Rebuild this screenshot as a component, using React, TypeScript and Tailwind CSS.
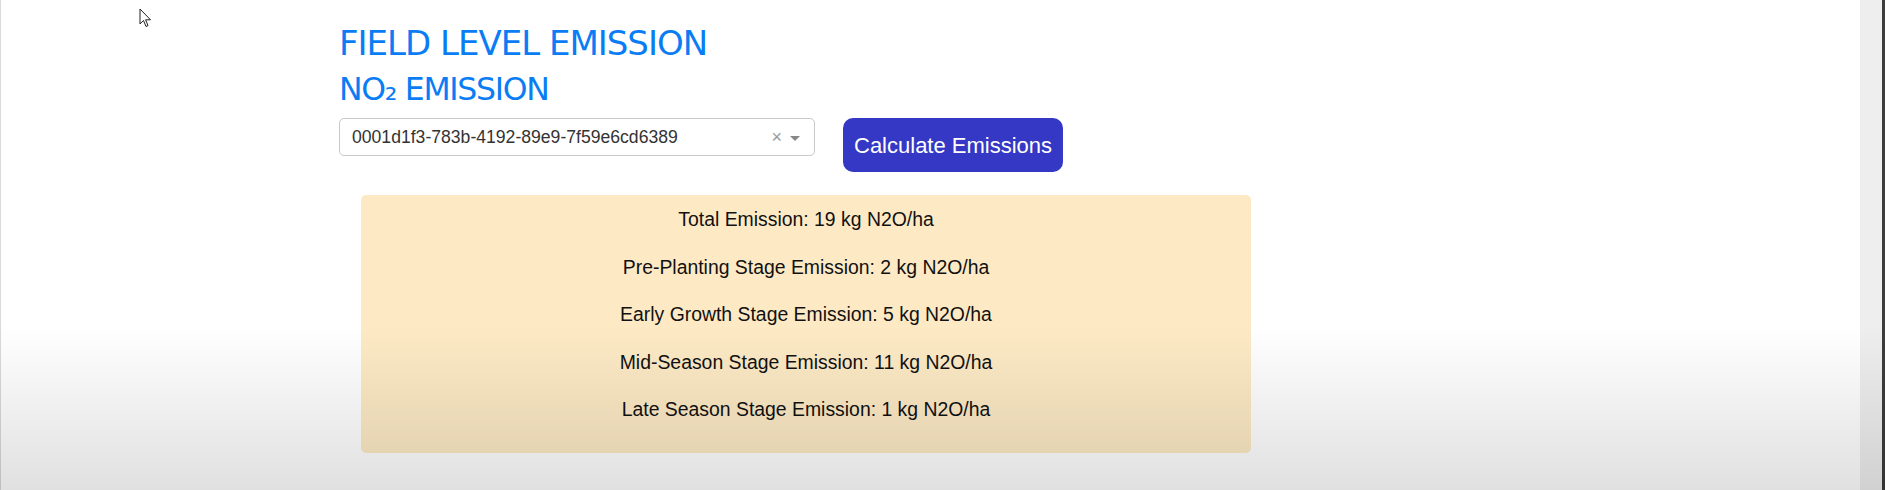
import React from "react";

const lines = [
  "Total Emission: 19 kg N2O/ha",
  "Pre-Planting Stage Emission: 2 kg N2O/ha",
  "Early Growth Stage Emission: 5 kg N2O/ha",
  "Mid-Season Stage Emission: 11 kg N2O/ha",
  "Late Season Stage Emission: 1 kg N2O/ha",
];

export default function App() {
  return (
    <div className="relative w-[1885px] h-[490px] overflow-hidden bg-white flex">
      <div className="w-px bg-[#d9d9d9]" />
      <main className="flex-1 relative">
        <svg
          className="absolute left-[138px] top-[8px]"
          width="13"
          height="20"
          viewBox="0 0 13 20"
        >
          <path
            d="M1 1 L1 16 L4.5 12.5 L7 18.5 L9 17.6 L6.6 11.8 L11.5 11.8 Z"
            fill="#fff"
            stroke="#222"
            strokeWidth="1"
            strokeLinejoin="round"
          />
        </svg>
        <div className="ml-[338px] pt-[23px]">
          <h1
            className="text-[34px] leading-[40px] tracking-[-1px] text-[#0a7df5]"
            style={{ fontFamily: '"DejaVu Sans", Tahoma, sans-serif' }}
          >
            FIELD LEVEL EMISSION
          </h1>
          <h2
            className="mt-[8px] text-[31.5px] leading-[36px] tracking-[-1.3px] text-[#0a7df5]"
            style={{ fontFamily: '"DejaVu Sans", Tahoma, sans-serif' }}
          >
            NO₂ EMISSION
          </h2>
          <div className="mt-[10px] flex items-start gap-[28px]">
            <div
              className="mt-px w-[476px] h-[38px] border border-[#c8c8c8] rounded-[5px] flex items-center pl-[12px] pr-[14px]"
              style={{ fontFamily: '"Liberation Sans", Arial, sans-serif' }}
            >
              <span className="flex-1 text-[17.6px] text-[#333]">
                0001d1f3-783b-4192-89e9-7f59e6cd6389
              </span>
              <span className="text-[18px] text-[#999] leading-none mr-[8px]">×</span>
              <span className="w-0 h-0 border-l-[5px] border-r-[5px] border-t-[5px] border-l-transparent border-r-transparent border-t-[#888] mt-[2px]" />
            </div>
            <button
              className="mt-px h-[54px] px-[11px] rounded-[10px] bg-[#3438c4] text-white text-[22px]"
              style={{ fontFamily: '"Liberation Sans", Arial, sans-serif' }}
            >
              Calculate Emissions
            </button>
          </div>
          <div
            className="mt-[23px] ml-[22px] w-[890px] rounded-[5px] bg-[#fdeac5] pt-[10px] pb-[29px] flex flex-col gap-[18.5px] text-center text-[19.4px] leading-[29px] text-[#111]"
            style={{ fontFamily: '"Liberation Sans", Arial, sans-serif' }}
          >
            {lines.map((l) => (
              <p key={l}>{l}</p>
            ))}
          </div>
        </div>
      </main>
      <div className="w-[22px] bg-[#eeeeee]" />
      <div className="w-[3px] bg-[#3c3c3c]" />
      <div className="pointer-events-none absolute left-0 right-0 top-[325px] bottom-0 bg-gradient-to-b from-[rgba(0,0,0,0)] to-[rgba(0,0,0,0.12)]" />
    </div>
  );
}
